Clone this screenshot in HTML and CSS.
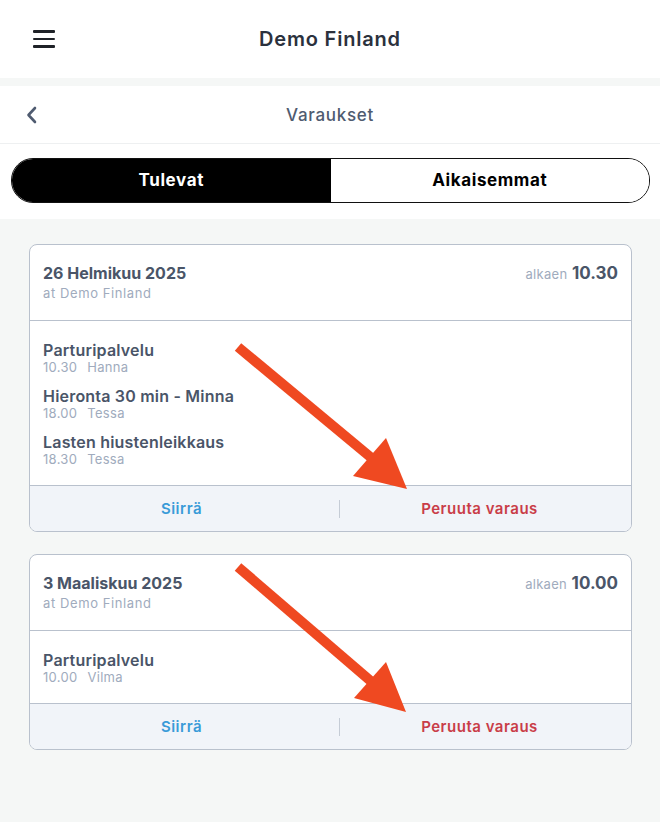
FILE: index.html
```html
<!DOCTYPE html>
<html lang="fi">
<head>
    <meta charset="UTF-8">
    <meta name="viewport" content="width=device-width, initial-scale=1.0">
    <title>Varaukset</title>
    <link rel="stylesheet" href="styles.css">
</head>
<body>
    <header class="topbar">
        <span class="burger"><i></i><i></i><i></i></span>
        <h1>Demo Finland</h1>
        <span></span>
    </header>

    <div class="subbar">
        <svg class="back" width="14" height="20" viewBox="0 0 14 20"><path d="M10 3 L3.5 10 L10 17" fill="none" stroke="#4f5b70" stroke-width="2.6" stroke-linecap="round" stroke-linejoin="round"/></svg>
        <h2>Varaukset</h2>
        <span></span>
    </div>

    <div class="tabs-wrap">
        <div class="tabs">
            <button class="tab active">Tulevat</button>
            <button class="tab">Aikaisemmat</button>
        </div>
    </div>

    <main class="list">
        <div class="card">
            <div class="card-head">
                <div>
                    <div class="date">26 Helmikuu 2025</div>
                    <div class="place">at Demo Finland</div>
                </div>
                <div class="start"><span>alkaen</span> <b>10.30</b></div>
            </div>
            <div class="card-body">
                <div class="item">
                    <div class="item-name">Parturipalvelu</div>
                    <div class="item-meta">10.30 <span>Hanna</span></div>
                </div>
                <div class="item">
                    <div class="item-name">Hieronta 30 min - Minna</div>
                    <div class="item-meta">18.00 <span>Tessa</span></div>
                </div>
                <div class="item">
                    <div class="item-name">Lasten hiustenleikkaus</div>
                    <div class="item-meta">18.30 <span>Tessa</span></div>
                </div>
            </div>
            <div class="card-foot">
                <button class="move">Siirrä</button>
                <button class="cancel">Peruuta varaus</button>
            </div>
        </div>

        <div class="card">
            <div class="card-head">
                <div>
                    <div class="date">3 Maaliskuu 2025</div>
                    <div class="place">at Demo Finland</div>
                </div>
                <div class="start"><span>alkaen</span> <b>10.00</b></div>
            </div>
            <div class="card-body">
                <div class="item">
                    <div class="item-name">Parturipalvelu</div>
                    <div class="item-meta">10.00 <span>Vilma</span></div>
                </div>
            </div>
            <div class="card-foot">
                <button class="move">Siirrä</button>
                <button class="cancel">Peruuta varaus</button>
            </div>
        </div>
    </main>

    <!-- annotation arrows drawn over the screenshot -->
    <svg class="notes" width="660" height="822" viewBox="0 0 660 822">
        <g fill="#ef4921" stroke="#ef4921">
            <line x1="238" y1="347" x2="374" y2="460" stroke-width="10"/>
            <polygon points="407,489 386,438 353,476" stroke="none"/>
            <line x1="238" y1="567" x2="373" y2="683" stroke-width="10"/>
            <polygon points="406,712 386,662 354,698" stroke="none"/>
        </g>
    </svg>
</body>
</html>
```

FILE: styles.css
```css
  body{
      margin:0;
      background-color:#f5f7f6;
      font-family:Inter, "Open Sans", sans-serif;
      color:#4a5568;
      position:relative;
      min-height:822px;
  }

  .topbar, .subbar{
      display:grid;
      grid-template-columns:1fr auto 1fr;
      align-items:center;
      background-color:white;
  }

  .topbar{
      height:78px;
  }

  .topbar h1{
      margin:0;
      font-size:20px;
      font-weight:600;
      letter-spacing:0.8px;
      color:#2b313d;
  }

  .burger{
      display:flex;
      flex-direction:column;
      gap:5px;
      width:22px;
      margin-left:33px;
  }

  .burger i{
      display:block;
      height:2.5px;
      background-color:#1f2228;
      border-radius:1px;
  }

  .subbar{
      margin-top:8px;
      height:57px;
  }

  .back{
      margin-left:25px;
  }

  .subbar h2{
      margin:0;
      font-size:17px;
      font-weight:500;
      letter-spacing:0.7px;
      color:#4f5b70;
  }

  .tabs-wrap{
      background-color:white;
      border-top:1px solid #eef0f1;
      padding:14px 10px 16px 11px;
  }

  .tabs{
      display:grid;
      grid-template-columns:1fr 1fr;
      height:43px;
      border:1px solid #111;
      border-radius:22px;
      overflow:hidden;
  }

  .tab{
      border:none;
      background-color:white;
      font-family:inherit;
      font-size:17px;
      font-weight:700;
      letter-spacing:0.6px;
      color:#000;
      padding-bottom:2px;
  }

  .tab.active{
      background-color:#000;
      color:white;
  }

  .list{
      padding:25px 28px 0 29px;
  }

  .card{
      background-color:white;
      border:1px solid #b9c1cd;
      border-radius:8px;
      margin-bottom:22px;
      overflow:hidden;
  }

  .card-head{
      display:flex;
      justify-content:space-between;
      align-items:flex-start;
      padding:18px 13px 0 13px;
      height:57px;
      border-bottom:1px solid #b9c1cd;
  }

  .date{
      font-size:16px;
      font-weight:700;
      color:#4a5568;
      line-height:21px;
  }

  .place{
      font-size:13px;
      letter-spacing:0.6px;
      color:#a0abbd;
      line-height:18px;
  }

  .start{
      line-height:21px;
  }

  .start span{
      font-size:13px;
      letter-spacing:0.3px;
      color:#a0abbd;
  }

  .start b{
      font-size:17px;
      font-weight:700;
      color:#4a5568;
  }

  .card-body{
      display:flex;
      flex-direction:column;
      gap:11px;
      padding:19px 13px 18px 13px;
  }

  .item-name{
      font-size:16px;
      font-weight:600;
      line-height:20px;
      letter-spacing:0.2px;
      color:#4a5568;
  }

  .item-meta{
      font-size:13px;
      line-height:15px;
      letter-spacing:0.3px;
      color:#a0abbd;
  }

  .item-meta span{
      margin-left:6px;
  }

  .card-foot{
      display:grid;
      grid-template-columns:309px 1fr;
      align-items:center;
      height:45px;
      background-color:#f1f4f9;
      border-top:1px solid #b9c1cd;
  }

  .card-foot button{
      border:none;
      background:none;
      font-family:inherit;
      font-size:15px;
      font-weight:600;
      letter-spacing:0.5px;
      line-height:18px;
      height:18px;
      padding:0;
  }

  .move{
      color:#3a9bd8;
      padding-right:6px !important;
  }

  .cancel{
      color:#c93d48;
      border-left:1px solid #c5ccd6 !important;
      padding-right:12px !important;
  }

  .notes{
      position:absolute;
      top:0;
      left:0;
      pointer-events:none;
  }
```
